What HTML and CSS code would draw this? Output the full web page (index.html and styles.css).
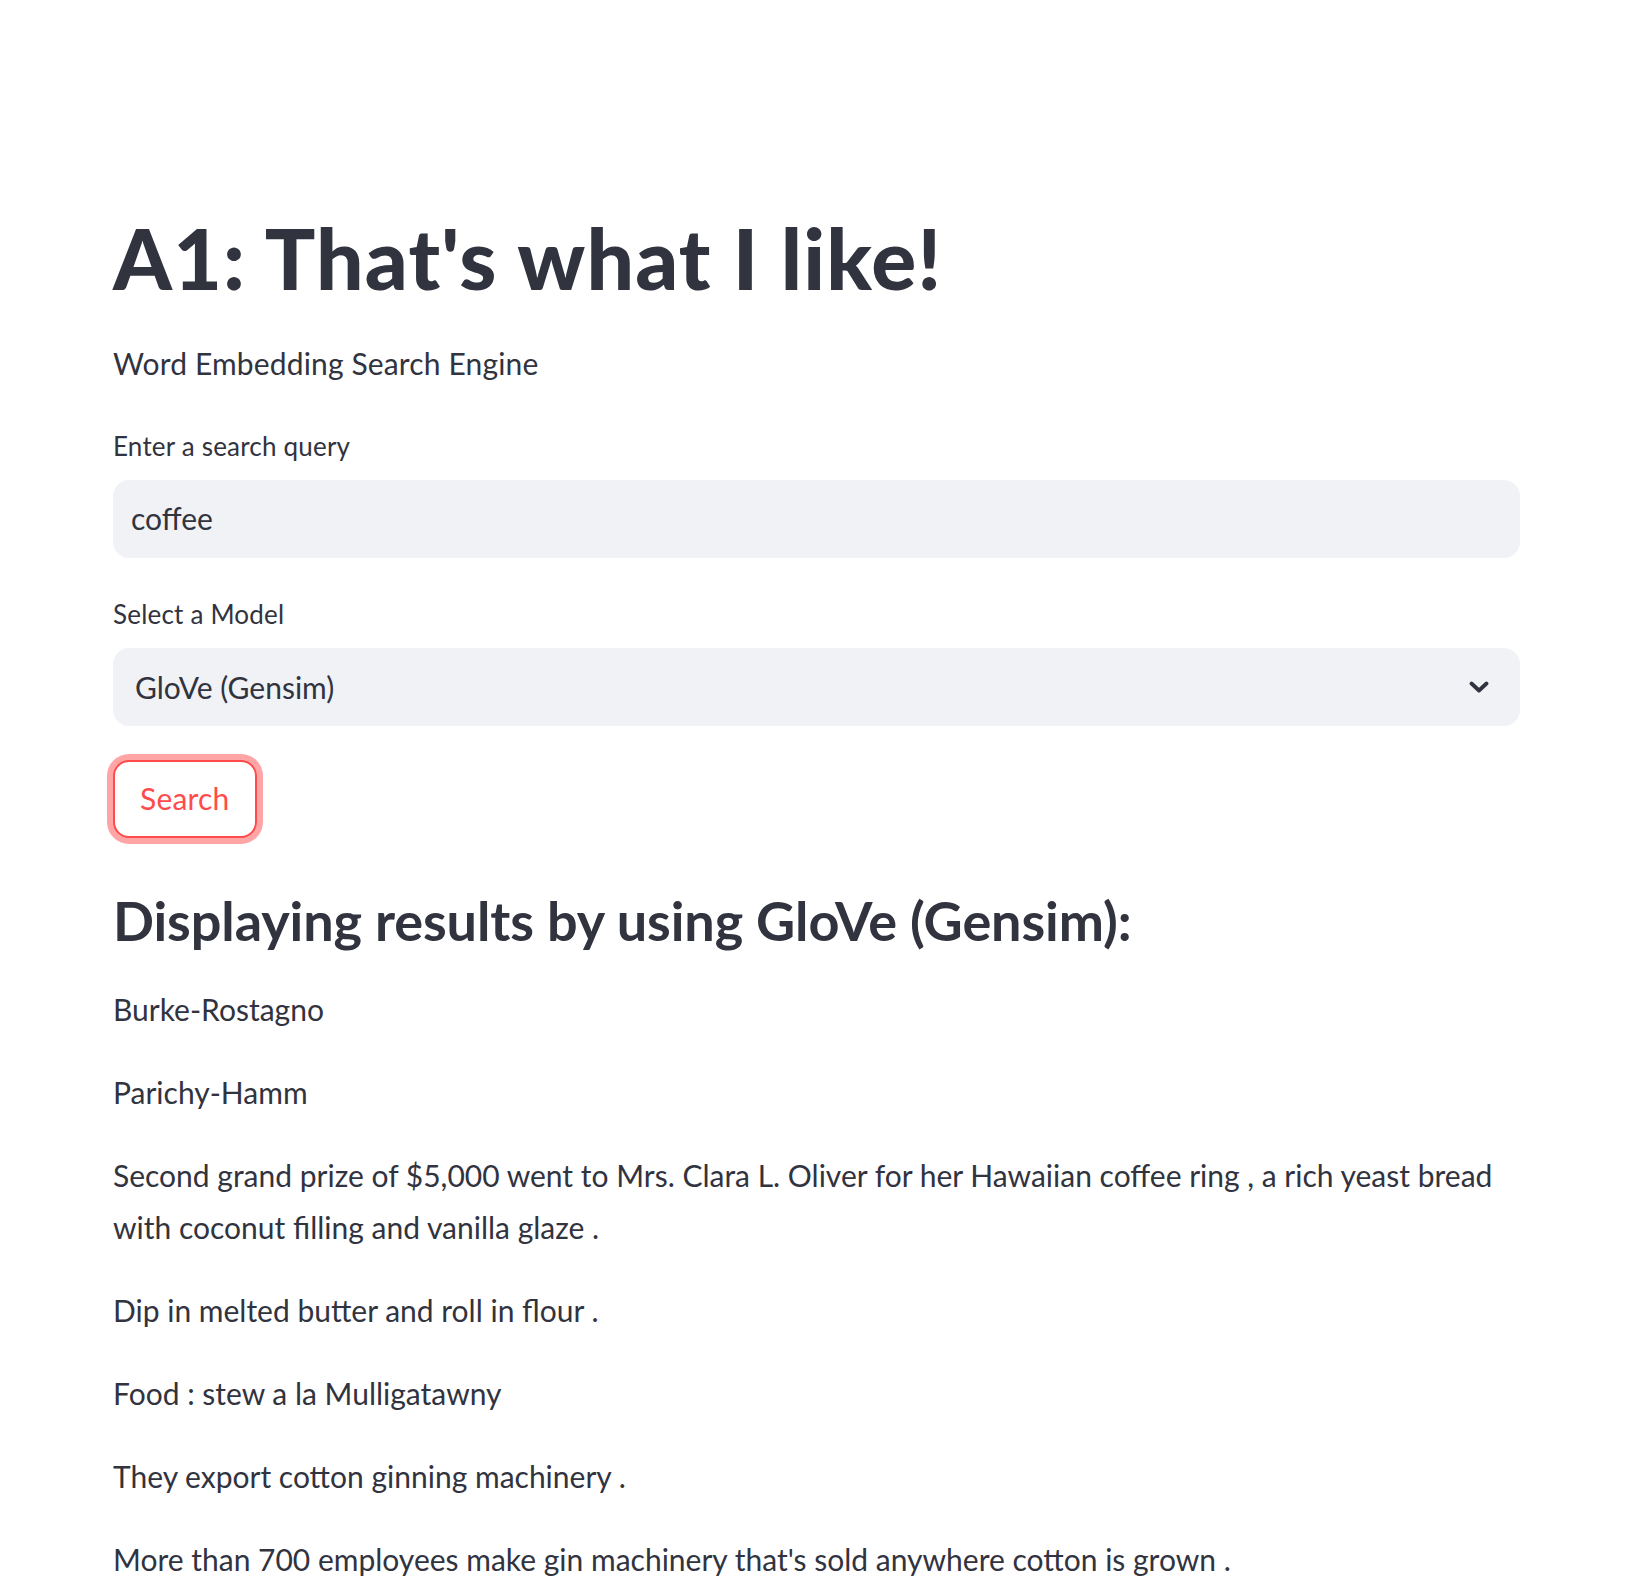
FILE: index.html
```html
<!DOCTYPE html>
<html lang="en">
<head>
<meta charset="utf-8">
<title>A1: That's what I like!</title>
<link rel="stylesheet" href="styles.css">
</head>
<body>
<main class="app">
  <h1 class="title">A1: That's what I like!</h1>
  <p class="subtitle">Word Embedding Search Engine</p>

  <div class="field">
    <label class="label">Enter a search query</label>
    <div class="input">coffee</div>
  </div>

  <div class="field field-select">
    <label class="label">Select a Model</label>
    <div class="select">
      <span class="select-value">GloVe (Gensim)</span>
      <svg class="chevron" width="20" height="12" viewBox="0 0 20 12" aria-hidden="true">
        <path d="M2.5 2.5 L10 9.5 L17.5 2.5" fill="none" stroke="#31333F" stroke-width="3.8" stroke-linecap="round" stroke-linejoin="round"/>
      </svg>
    </div>
  </div>

  <button class="btn">Search</button>

  <h3 class="results-title">Displaying results by using GloVe (Gensim):</h3>

  <div class="results">
    <p>Burke-Rostagno</p>
    <p>Parichy-Hamm</p>
    <p>Second grand prize of $5,000 went to Mrs. Clara L. Oliver for her Hawaiian coffee ring , a rich yeast bread with coconut filling and vanilla glaze .</p>
    <p>Dip in melted butter and roll in flour .</p>
    <p>Food : stew a la Mulligatawny</p>
    <p>They export cotton ginning machinery .</p>
    <p>More than 700 employees make gin machinery that's sold anywhere cotton is grown .</p>
  </div>
</main>
</body>
</html>
```

FILE: styles.css
```css
html, body {
  margin: 0;
  padding: 0;
  background: #ffffff;
}

body {
  font-family: "Lato", "Noto Sans", sans-serif;
  color: #31333F;
  overflow: hidden;
}

.app {
  width: 1407px;
  margin-left: 113px;
  padding-top: 208px;
}

.title {
  margin: 0;
  font-size: 84px;
  line-height: 100px;
  font-weight: 900;
  letter-spacing: 1.2px;
}

.subtitle {
  margin: 31px 0 0;
  font-size: 30px;
  line-height: 48px;
  letter-spacing: 0.15px;
}

.field {
  display: flex;
  flex-direction: column;
}

.label {
  margin-top: 39px;
  font-size: 26px;
  line-height: 40px;
  letter-spacing: 0.2px;
}

.field-select .label {
  margin-top: 36px;
}

.input,
.select {
  margin-top: 14px;
  height: 78px;
  box-sizing: border-box;
  background: #F0F2F6;
  border-radius: 16px;
  display: flex;
  align-items: center;
  font-size: 30px;
}

.input {
  padding: 0 18px 3px;
}

.select {
  padding: 0 31px 0 22px;
  justify-content: space-between;
}

.chevron {
  flex: none;
}

.btn {
  display: block;
  margin-top: 34px;
  height: 78px;
  box-sizing: border-box;
  padding: 0 25px 2px;
  background: #ffffff;
  border: 2px solid #FF4B4B;
  border-radius: 16px;
  box-shadow: 0 0 0 6px rgba(255, 75, 75, 0.5);
  color: #FF4B4B;
  font-family: "Lato", "Noto Sans", sans-serif;
  font-size: 30px;
  letter-spacing: 0.2px;
}

.results-title {
  margin: 51px 0 0;
  font-size: 54px;
  line-height: 64px;
  font-weight: 700;
  letter-spacing: -0.1px;
}

.results {
  margin-top: 31px;
}

.results p {
  margin: 0 0 32px;
  font-size: 30px;
  line-height: 51.2px;
}
```
